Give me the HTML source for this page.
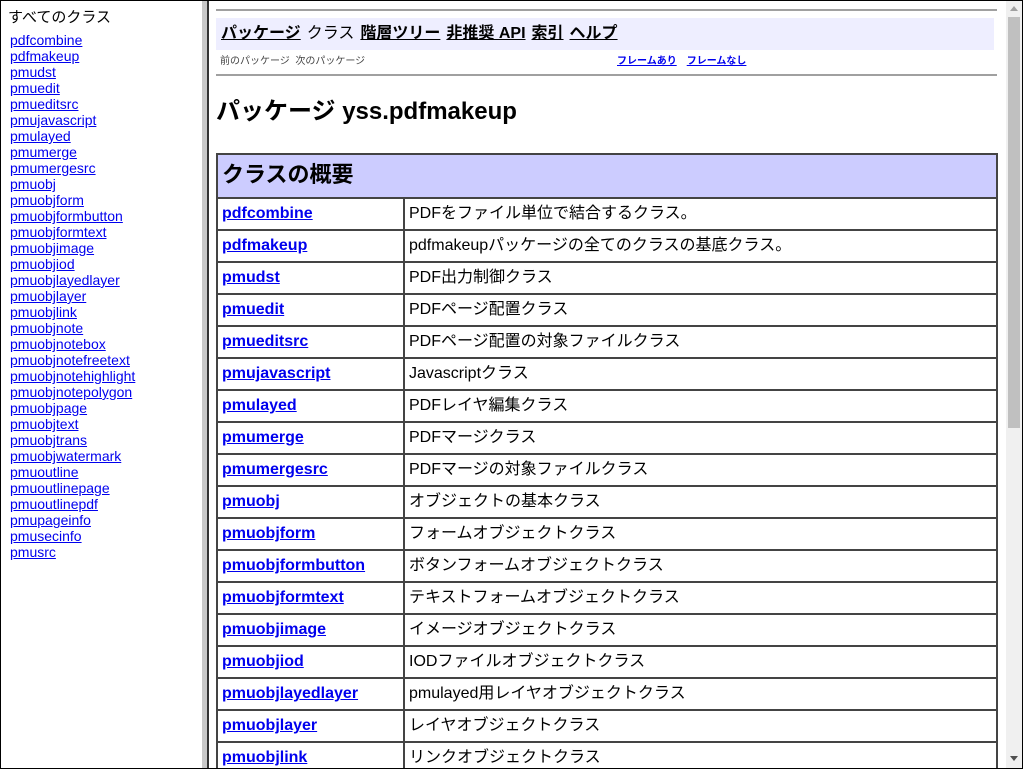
<!DOCTYPE html>
<html><head><meta charset="utf-8"><style>
*{margin:0;padding:0;box-sizing:border-box}
body{width:1023px;height:769px;overflow:hidden;background:#fff;font-family:"Liberation Sans","Noto Sans CJK JP",sans-serif;position:relative}
.frame{position:absolute;inset:0;border:1px solid #000;}
#left{position:absolute;left:1px;top:1px;width:201px;height:767px;background:#fff;overflow:hidden}
#left h2{font-size:15px;font-weight:normal;position:absolute;left:7px;top:8px;line-height:18px;color:#000}
#left ul{list-style:none;position:absolute;left:9px;top:31px}
#left li{font-size:14px;line-height:16px;height:16px}
#left a{color:#00e;text-decoration:underline}
#div1{position:absolute;left:202px;top:1px;width:5px;height:767px;background:#c8c8c8}
#div2{position:absolute;left:207px;top:1px;width:2px;height:767px;background:#333}
#right{position:absolute;left:209px;top:1px;width:797px;height:767px;overflow:hidden}
#sb{position:absolute;left:1006px;top:1px;width:16px;height:767px;background:#f0f0f0}
#thumb{position:absolute;left:2px;top:16px;width:12px;height:411px;background:#c0c0c0}
.hr{position:absolute;left:7px;width:781px;height:2px;background:#a0a0a0}
#nav{position:absolute;left:7px;top:17px;width:778px;height:32px;background:#eeeeff;font-size:16px;line-height:32px;padding-left:5px;font-weight:bold}
#nav a{color:#000;text-decoration:underline;margin-right:6px}
#nav span{font-weight:normal;margin-right:6px}
.sm{position:absolute;top:51px;font-size:10px;color:#444}
.sm a{color:#00e;font-weight:bold;margin-right:10px;text-decoration:underline}
h1{position:absolute;left:7px;top:96px;font-size:24px;font-weight:bold;line-height:30px}
table{position:absolute;left:7px;top:152px;width:782px;border-collapse:collapse;border:2px solid #444}
td,th{border:2px solid #444;height:32px;font-size:16px;line-height:18px;padding:0 4px;text-align:left;vertical-align:middle}
th{background:#ccccff;height:44px;font-size:22px;line-height:26px;font-weight:bold;padding:0 0 2px 4px}
td.c1{width:187px;font-weight:bold}
td.c1 a{color:#00e;text-decoration:underline}
</style></head><body>
<div id="left">
<h2>すべてのクラス</h2>
<ul>
<li><a>pdfcombine</a></li><li><a>pdfmakeup</a></li><li><a>pmudst</a></li><li><a>pmuedit</a></li><li><a>pmueditsrc</a></li><li><a>pmujavascript</a></li><li><a>pmulayed</a></li><li><a>pmumerge</a></li><li><a>pmumergesrc</a></li><li><a>pmuobj</a></li><li><a>pmuobjform</a></li><li><a>pmuobjformbutton</a></li><li><a>pmuobjformtext</a></li><li><a>pmuobjimage</a></li><li><a>pmuobjiod</a></li><li><a>pmuobjlayedlayer</a></li><li><a>pmuobjlayer</a></li><li><a>pmuobjlink</a></li><li><a>pmuobjnote</a></li><li><a>pmuobjnotebox</a></li><li><a>pmuobjnotefreetext</a></li><li><a>pmuobjnotehighlight</a></li><li><a>pmuobjnotepolygon</a></li><li><a>pmuobjpage</a></li><li><a>pmuobjtext</a></li><li><a>pmuobjtrans</a></li><li><a>pmuobjwatermark</a></li><li><a>pmuoutline</a></li><li><a>pmuoutlinepage</a></li><li><a>pmuoutlinepdf</a></li><li><a>pmupageinfo</a></li><li><a>pmusecinfo</a></li><li><a>pmusrc</a></li>
</ul></div>
<div id="div1"></div><div id="div2"></div>
<div id="right">
<div class="hr" style="top:8px"></div>
<div id="nav"><a>パッケージ</a><span>クラス</span><a>階層ツリー</a><a>非推奨 API</a><a>索引</a><a>ヘルプ</a></div>
<div class="sm" style="left:11px">前のパッケージ&nbsp;&nbsp;次のパッケージ</div>
<div class="sm" style="left:408px"><a>フレームあり</a><a>フレームなし</a></div>
<div class="hr" style="top:73px"></div>
<h1>パッケージ yss.pdfmakeup</h1>
<table>
<tr><th colspan="2">クラスの概要</th></tr>
<tr><td class="c1"><a>pdfcombine</a></td><td>PDFをファイル単位で結合するクラス。</td></tr>
<tr><td class="c1"><a>pdfmakeup</a></td><td>pdfmakeupパッケージの全てのクラスの基底クラス。</td></tr>
<tr><td class="c1"><a>pmudst</a></td><td>PDF出力制御クラス</td></tr>
<tr><td class="c1"><a>pmuedit</a></td><td>PDFページ配置クラス</td></tr>
<tr><td class="c1"><a>pmueditsrc</a></td><td>PDFページ配置の対象ファイルクラス</td></tr>
<tr><td class="c1"><a>pmujavascript</a></td><td>Javascriptクラス</td></tr>
<tr><td class="c1"><a>pmulayed</a></td><td>PDFレイヤ編集クラス</td></tr>
<tr><td class="c1"><a>pmumerge</a></td><td>PDFマージクラス</td></tr>
<tr><td class="c1"><a>pmumergesrc</a></td><td>PDFマージの対象ファイルクラス</td></tr>
<tr><td class="c1"><a>pmuobj</a></td><td>オブジェクトの基本クラス</td></tr>
<tr><td class="c1"><a>pmuobjform</a></td><td>フォームオブジェクトクラス</td></tr>
<tr><td class="c1"><a>pmuobjformbutton</a></td><td>ボタンフォームオブジェクトクラス</td></tr>
<tr><td class="c1"><a>pmuobjformtext</a></td><td>テキストフォームオブジェクトクラス</td></tr>
<tr><td class="c1"><a>pmuobjimage</a></td><td>イメージオブジェクトクラス</td></tr>
<tr><td class="c1"><a>pmuobjiod</a></td><td>IODファイルオブジェクトクラス</td></tr>
<tr><td class="c1"><a>pmuobjlayedlayer</a></td><td>pmulayed用レイヤオブジェクトクラス</td></tr>
<tr><td class="c1"><a>pmuobjlayer</a></td><td>レイヤオブジェクトクラス</td></tr>
<tr><td class="c1"><a>pmuobjlink</a></td><td>リンクオブジェクトクラス</td></tr>
<tr><td class="c1"><a>pmuobjnote</a></td><td>注釈オブジェクトクラス</td></tr>
</table>
</div>
<div id="sb"><div id="thumb"></div>
<svg style="position:absolute;left:4px;top:5px" width="8" height="5"><path d="M0 5L4 0L8 5Z" fill="#a0a0a0"/></svg>
<svg style="position:absolute;left:4px;top:755px" width="8" height="5"><path d="M0 0L4 5L8 0Z" fill="#505050"/></svg>
</div>
<div class="frame"></div>
</body></html>
